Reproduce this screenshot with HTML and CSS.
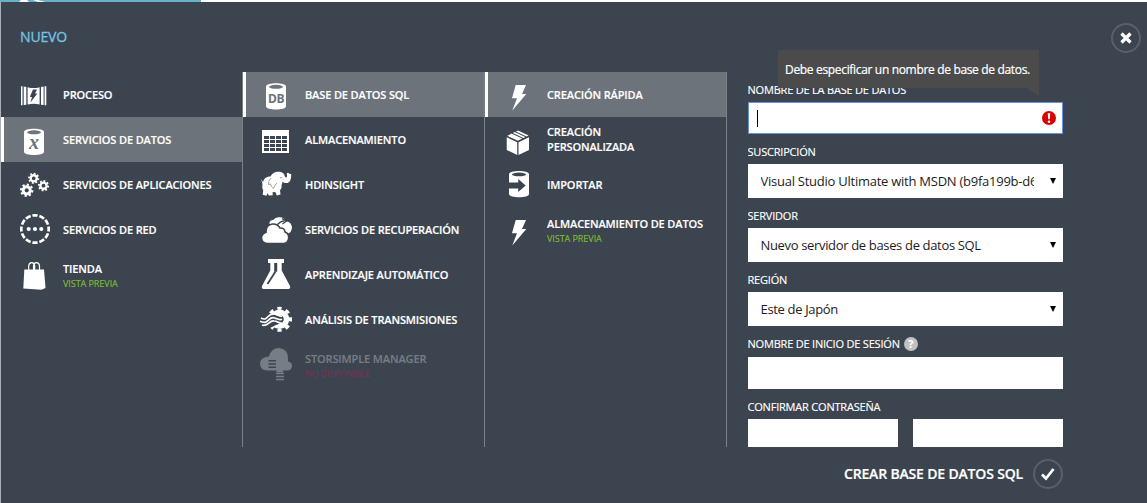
FILE: index.html
```
<!DOCTYPE html>
<html lang="es">
<head>
<meta charset="utf-8">
<title>Nuevo</title>
<link rel="stylesheet" href="styles.css">
</head>
<body>
<div class="strip">
  <div class="strip-brand">
    <svg width="120" height="2" viewBox="0 0 120 2"><path d="M19 2L21 0H27L29 2ZM33 0H38L45 2H38Z" fill="#fff"/></svg>
  </div>
</div>
<main class="drawer">
  <header class="head">
    <h1 class="title">NUEVO</h1>
    <button class="round close" aria-label="Cerrar"><svg width="12" height="12" viewBox="0 0 12 12"><path d="M1.500 1.500L10.500 10.500M10.500 1.500L1.500 10.500" stroke="#fff" stroke-width="3.200"/></svg></button>
  </header>
  <div class="body">
    <ul class="menu">
      <li class="item">
        <svg class="icon" viewBox="0 0 40 45"><path d="M5 14.300h1.500v19H5zM7.700 14.600l2.600.3v17.800l-2.600.3zM11.600 15.200Q18 17 23.600 15.200V32.600Q18 31 11.600 32.600zM25 14.900l2.600-.3v18.400l-2.600-.3zM28.600 14.300h1.700v19h-1.700z" fill="#fff"/><path d="M17 17.500h4l-2 4h2.300L14.500 30.500l1.500-5.500h-2.200z" fill="#3c444f"/></svg>
        <span class="name">PROCESO</span>
      </li>
      <li class="item on">
        <svg class="icon" viewBox="0 0 40 45"><path d="M8 15c0-4.400 20-4.400 20 0v19.800c0 4.400-20 4.400-20 0z" fill="#fff"/><ellipse cx="18" cy="15.300" rx="7" ry="2" fill="#6d737a"/><text class="glyph-x" x="18" y="31.500">x</text></svg>
        <span class="name">SERVICIOS DE DATOS</span>
      </li>
      <li class="item">
        <svg class="icon" viewBox="0 0 40 45" fill="none" stroke="#fff">
          <circle cx="17.700" cy="16.300" r="3.100" stroke-width="2.400"/><circle cx="17.700" cy="16.300" r="4.700" stroke-width="1.800" pathLength="16" stroke-dasharray="1"/>
          <circle cx="27.500" cy="23.700" r="3.100" stroke-width="2.400"/><circle cx="27.500" cy="23.700" r="4.700" stroke-width="1.800" pathLength="16" stroke-dasharray="1"/>
          <circle cx="10.700" cy="28.300" r="3.600" stroke-width="3"/><circle cx="10.700" cy="28.300" r="5.700" stroke-width="2" pathLength="16" stroke-dasharray="1"/>
        </svg>
        <span class="name">SERVICIOS DE APLICACIONES</span>
      </li>
      <li class="item">
        <svg class="icon" viewBox="0 0 40 45"><circle cx="19" cy="22" r="13.700" fill="none" stroke="#fff" stroke-width="2.700" pathLength="48" stroke-dasharray="3 1" stroke-dashoffset="1.500"/><g fill="#fff"><circle cx="12.700" cy="22" r="2.100"/><circle cx="19" cy="22" r="2.100"/><circle cx="25.300" cy="22" r="2.100"/></g></svg>
        <span class="name">SERVICIOS DE RED</span>
      </li>
      <li class="item two">
        <svg class="icon" viewBox="0 0 40 45"><path d="M8.300 17.500H28L29.500 36l-4 1.700L7.300 36.500z" fill="#fff"/><path d="M12.700 20v-6q.3-3.300 3-3.300t3 3.300v4M17.500 18v-4q.3-3.300 3-3.300t3 3.300v6" fill="none" stroke="#fff" stroke-width="1.200"/></svg>
        <span class="name">TIENDA<small class="note">VISTA PREVIA</small></span>
      </li>
    </ul>
    <ul class="menu">
      <li class="item on">
        <svg class="icon" viewBox="0 0 40 45"><path d="M8 14.500c0-4.400 20-4.400 20 0v19.800c0 4.400-20 4.400-20 0z" fill="#fff"/><ellipse cx="18" cy="14.800" rx="7" ry="2" fill="#6d737a"/><text class="glyph-db" x="18" y="31">DB</text></svg>
        <span class="name">BASE DE DATOS SQL</span>
      </li>
      <li class="item">
        <svg class="icon" viewBox="0 0 40 45"><path d="M4 13h27v23H4z" fill="#fff"/><path d="M6 20.500h23M6 24.500h23M6 28.500h23M6 32.500h23" stroke="#3c444f" stroke-width="3" stroke-dasharray="5 1"/></svg>
        <span class="name">ALMACENAMIENTO</span>
      </li>
      <li class="item">
        <svg class="icon" viewBox="0 0 40 45"><path d="M3 17l2 3.200C6 16 9 14.500 12.500 14.500c1.500-3.500 5-5.200 8.500-4.800 3.500-.2 5.500 2 6 5 1.200 1.500 2.300.5 2-1.500l-.3-2 1.500-.5 1.500 1.300 1.400-.3c.6 5-1.300 9.800-5 9.300-1.700 0-2.600-.5-3.300-1.500l-1.200 3.500c.3 2.500-.3 4-1.600 5l.5 4.500-3.700 1-1.500-3.500-2.800.3.300 3-4 .2-1.300-2.500-1 2.700-3.800-1 .5-4.500-1-2.300L4 28l.5-6z" fill="#fff"/><path d="M13 16q-3 3-2.500 6.500l2-.5q.5 3 3 4.500 1.500-4 3.500-5.500" fill="none" stroke="#767d86" stroke-width=".7"/><circle cx="23" cy="15.700" r=".6" fill="#3c444f"/></svg>
        <span class="name">HDINSIGHT</span>
      </li>
      <li class="item">
        <svg class="icon" viewBox="0 0 40 45"><path d="M11.500 17q-.5-4 4-4.300 2-3 6-2.400 4.500-.3 6 4 6 .5 6.500 6.200-.5 5.500-5 6.500H18z" fill="#fff"/><path d="M9.500 36.500Q3.500 36 3.500 30.500q.5-4 4.500-5Q7.500 18 14.500 17q5-.3 7.500 4 4.500-.3 5 4 4 1.500 3.700 6-.7 5-5 5.500z" fill="#fff" stroke="#3c444f" stroke-width="1.600"/><path d="M19.500 17.500q3-3.500 7-3.600M24 11.700l4.500 2.200-4 3" fill="none" stroke="#3c444f" stroke-width="1.300"/></svg>
        <span class="name">SERVICIOS DE RECUPERACIÓN</span>
      </li>
      <li class="item">
        <svg class="icon" viewBox="0 0 40 45"><path d="M10 7h16v4h-2.300v7.500L32 34q1 3-2 3H6q-3 0-2-3l8.300-15.500V11H10z" fill="#fff"/><path d="M16.200 11h3v8.700h-3z" fill="#3c444f"/><path d="M17.500 19.500L9.500 32" fill="none" stroke="#3c444f" stroke-width="1.800"/></svg>
        <span class="name">APRENDIZAJE AUTOMÁTICO</span>
      </li>
      <li class="item">
        <svg class="icon" viewBox="0 0 40 45"><circle cx="21.500" cy="22.300" r="7" fill="none" stroke="#fff" stroke-width="5.500"/><circle cx="21.500" cy="22.300" r="11" fill="none" stroke="#fff" stroke-width="3" pathLength="16" stroke-dasharray="1" stroke-dashoffset=".5"/><path d="M1 17h12l4 1 7 3v5l-6 2-6 3H1z" fill="#3c444f"/><path d="M3 21c7 4 6-5 13-4 4 0 5 3 8 2M2 24.300c9 4 8-5 14-3.500 4 .5 5 3 8 1.500M4 28c7 2 7-5 12-4 4 0 5 3 8 2" fill="none" stroke="#fff" stroke-width="1.700"/></svg>
        <span class="name">ANÁLISIS DE TRANSMISIONES</span>
      </li>
      <li class="item two off">
        <svg class="icon" viewBox="0 0 40 45"><path d="M10 28.500Q2.500 29 2 21.500 2.500 15 11 14.500 13 6 21 6q9 1 9 10v3.500q4 .5 4 4.500-.3 4.500-5 4.500H25v2h-6.500v-2z" fill="#777d84"/><path d="M10.500 18.700H18M10.500 22H18M10.500 25.300H18" stroke="#3c444f" stroke-width="1.400"/><path d="M18 31.500h8M18 34.500h8M18 37.500h8" stroke="#777d84" stroke-width="1.600"/></svg>
        <span class="name">STORSIMPLE MANAGER<small class="note">NO DISPONIBLE</small></span>
      </li>
    </ul>
    <ul class="menu">
      <li class="item on">
        <svg class="icon" viewBox="0 0 40 45"><path d="M15.700 13H26l-4 9h4.300L12.300 38.500 17 26.300h-5z" fill="#fff"/></svg>
        <span class="name">CREACIÓN RÁPIDA</span>
      </li>
      <li class="item">
        <svg class="icon" viewBox="0 0 40 45"><path d="M6.700 20.300l10.500 5V38l-10.500-5zM29 20.300l-10.500 5V38L29 33zM7.300 18.800l4.200-2.200 10.700 5-4.300 2.200zM12.900 16l1.700-.9 10.600 5-1.700.9zM15.900 14.400l2.100-1 10.600 5.200-2.200 1z" fill="#fff"/></svg>
        <span class="name">CREACIÓN<br>PERSONALIZADA</span>
      </li>
      <li class="item">
        <svg class="icon" viewBox="0 0 40 45"><path d="M9 12.300c0-4.300 20-4.300 20 0v19.800c0 4.300-20 4.300-20 0z" fill="#fff"/><ellipse cx="19" cy="12.400" rx="7" ry="1.800" fill="#3c444f"/><path d="M8.500 20.500h9.700V17l7.500 6.500-7.500 6.500v-3.500H8.500z" fill="#3c444f"/></svg>
        <span class="name">IMPORTAR</span>
      </li>
      <li class="item two">
        <svg class="icon" viewBox="0 0 40 45"><path d="M15.700 13H26l-4 9h4.300L12.300 38.500 17 26.300h-5z" fill="#fff"/></svg>
        <span class="name">ALMACENAMIENTO DE DATOS<small class="note">VISTA PREVIA</small></span>
      </li>
    </ul>
    <div class="panel">
      <form class="form">
        <label class="label">NOMBRE DE LA BASE DE DATOS</label>
        <div class="input focus"><i class="caret"></i><svg width="14" height="14" viewBox="0 0 14 14"><circle cx="7" cy="7" r="7" fill="#d90000"/><path d="M5.700 2.300h2.600L7.800 8.300H6.200z" fill="#fff"/><circle cx="7" cy="10.700" r="1.300" fill="#fff"/></svg></div>
        <label class="label">SUSCRIPCIÓN</label>
        <div class="select"><span class="value long">Visual Studio Ultimate with MSDN (b9fa199b-d6</span><i class="arrow"></i></div>
        <label class="label">SERVIDOR</label>
        <div class="select"><span class="value">Nuevo servidor de bases de datos SQL</span><i class="arrow"></i></div>
        <label class="label">REGIÓN</label>
        <div class="select"><span class="value">Este de Japón</span><i class="arrow"></i></div>
        <label class="label login">NOMBRE DE INICIO DE SESIÓN <span class="help">?</span></label>
        <div class="input"></div>
        <label class="label">CONFIRMAR CONTRASEÑA</label>
        <div class="pair"><div class="input"></div><div class="input"></div></div>
      </form>
      <div class="tip">Debe especificar un nombre de base de datos.</div>
    </div>
  </div>
  <footer class="foot">
    <span class="create">CREAR BASE DE DATOS SQL</span>
    <button class="round" aria-label="Crear"><svg width="16" height="14" viewBox="0 0 16 14"><path d="M2 7.500L6 11.500L13.500 2" fill="none" stroke="#fff" stroke-width="2.800"/></svg></button>
  </footer>
</main>
</body>
</html>
```
FILE: styles.css
```
* { box-sizing: border-box; }
body { margin: 0; height: 503px; overflow: hidden; background: #fff; font-family: "Open Sans", "Noto Sans", sans-serif; color: #fff; }
.strip { height: 2px; background: #fff; }
.strip-brand { width: 201px; height: 2px; background: #69b1cb; }
.strip-brand svg { display: block; }
.drawer { height: 501px; background: #3c444f; border-left: 1px solid #a9b0b6; }
.head { height: 70px; display: flex; justify-content: space-between; align-items: flex-start; padding: 21px 6px 0 19px; }
.title { margin: 4px 0 0; font-size: 14px; line-height: 20px; font-weight: 400; letter-spacing: -0.15px; color: #72c3e6; -webkit-text-stroke: .3px #72c3e6; }
.round { flex: none; width: 30px; height: 30px; padding: 0; border: 2px solid #596069; border-radius: 50%; background: none; display: flex; align-items: center; justify-content: center; }
.body { display: flex; height: 375px; }
.menu { width: 242px; margin: 0; padding: 0; list-style: none; border-right: 1px solid #7b8188; }
.item { height: 45px; display: flex; align-items: center; padding-left: 15px; }
.item.on { background: #6d737a; border-left: 3px solid #fff; padding-left: 12px; }
.icon { flex: none; width: 40px; height: 45px; margin-right: 7px; }
.name { font-size: 11px; line-height: 15px; font-weight: 600; letter-spacing: -0.13px; white-space: nowrap; padding-bottom: 1px; -webkit-text-stroke: .15px currentColor; }
.two .name { padding: 2px 0 0; }
.note { display: block; font-size: 9px; line-height: 15px; font-weight: 400; letter-spacing: -0.05px; color: #7fba35; }
.off .name { color: #777d84; padding-top: 3px; }
.off .note { color: #703655; letter-spacing: -0.18px; }
.glyph-x { font: italic bold 20px "Liberation Serif", serif; fill: #6d737a; text-anchor: middle; }
.glyph-db { font: 700 12px "Open Sans", sans-serif; fill: #6d737a; text-anchor: middle; letter-spacing: -0.5px; }
.panel { position: relative; width: 315px; margin-left: 21px; }
.form { height: 375px; overflow: hidden; }
.label { display: flex; align-items: center; height: 30px; padding: 12px 0 6px; margin-left: -0.5px; font-size: 11px; line-height: 18px; letter-spacing: -0.2px; -webkit-text-stroke: .15px currentColor; }
.label.login { height: 31px; padding-bottom: 8px; }
.help { margin-left: 4px; width: 14px; height: 14px; border-radius: 50%; background: #c0c1c2; font-size: 11px; line-height: 14px; font-weight: 700; text-align: center; }
.input { height: 32px; background: #fff; }
.input.focus { border: 1px solid #6b93dc; display: flex; align-items: center; justify-content: space-between; padding: 0 6px 0 8px; }
.caret { width: 1px; height: 17px; background: #000; }
.select { height: 34px; background: #fff; display: flex; align-items: center; justify-content: space-between; padding: 0 7px 0 12.5px; color: #1c1c1c; }
.value { width: 273px; overflow: hidden; white-space: nowrap; font-size: 13px; line-height: 20px; letter-spacing: -0.34px; padding-bottom: 1px; }
.value.long { letter-spacing: -0.25px; }
.arrow { border: 3px solid transparent; border-top: 6px solid #000; border-bottom: 0; }
.pair { display: grid; grid-template-columns: 1fr 1fr; gap: 15px; }
.tip { position: absolute; left: 30px; top: -22px; width: 261px; height: 46px; padding: 10px 7px; background: #4b4b4c; clip-path: polygon(0 0, 100% 0, 100% 100%, 249px 38px, 0 38px); font-size: 12px; line-height: 20px; letter-spacing: -0.33px; white-space: nowrap; -webkit-text-stroke: .2px #fff; }
.foot { display: flex; align-items: center; justify-content: flex-end; gap: 10px; width: 1062px; height: 54px; }
.create { font-size: 14px; line-height: 20px; font-weight: 600; letter-spacing: -0.17px; -webkit-text-stroke: .2px currentColor; }
```
